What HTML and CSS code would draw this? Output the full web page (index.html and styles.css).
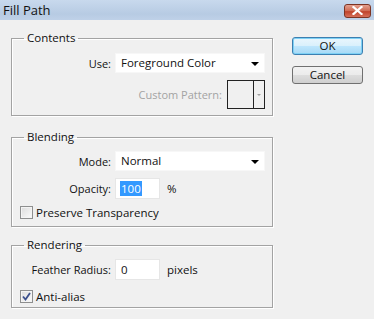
FILE: index.html
```html
<!DOCTYPE html>
<html>
<head>
<meta charset="utf-8">
<link rel="stylesheet" href="styles.css">
</head>
<body>
<div class="dialog">
  <div class="titlebar">
    <span class="title">Fill Path</span>
    <span class="close">
      <svg width="11" height="9" viewBox="0 0 11 9"><path d="M1.5 1 L9.5 8 M9.5 1 L1.5 8" stroke="#fff" stroke-width="2.2" stroke-linecap="square"/></svg>
    </span>
  </div>
  <div class="body">
    <div class="groups">
      <fieldset class="group g-contents">
        <legend>Contents</legend>
        <div class="grid first">
          <span class="label">Use:</span>
          <div class="select">Foreground Color<span class="caret"></span></div>
        </div>
        <div class="row-end">
          <span class="label disabled">Custom Pattern:</span>
          <div class="pattern"><span class="swatch"></span><span class="pat-arrow"><span class="mini-caret"></span></span></div>
        </div>
      </fieldset>

      <fieldset class="group g-blending">
        <legend>Blending</legend>
        <div class="grid first">
          <span class="label">Mode:</span>
          <div class="select">Normal<span class="caret"></span></div>
        </div>
        <div class="grid r-opacity">
          <span class="label">Opacity:</span>
          <div class="inline"><div class="input"><span class="sel">100</span></div><span class="unit">%</span></div>
        </div>
        <label class="check r-preserve"><span class="box"></span>Preserve Transparency</label>
      </fieldset>

      <fieldset class="group g-rendering">
        <legend>Rendering</legend>
        <div class="grid first">
          <span class="label">Feather Radius:</span>
          <div class="inline"><div class="input">0</div><span class="unit">pixels</span></div>
        </div>
        <label class="check r-anti"><span class="box checked"><svg width="9" height="9" viewBox="0 0 9 9"><path d="M1 4.5 L3.5 7.5 L8 1" fill="none" stroke="#3b4f8c" stroke-width="1.8"/></svg></span>Anti-alias</label>
      </fieldset>
    </div>
    <div class="buttons">
      <div class="btn default">OK</div>
      <div class="btn">Cancel</div>
    </div>
  </div>
</div>
</body>
</html>
```

FILE: styles.css
```css
html, body {
  margin: 0;
  padding: 0;
}
body {
  background: #f0f0f0;
  font-family: "Open Sans", "Noto Sans", sans-serif;
  font-size: 11px;
  color: #111;
  width: 374px;
  height: 319px;
  overflow: hidden;
}
.dialog {
  width: 374px;
  height: 319px;
}
.titlebar {
  height: 20px;
  display: flex;
  align-items: center;
  padding: 0 3px 0 3px;
  background: linear-gradient(#c8d9ed, #b7cbe3 70%, #bfd1e8);
  box-sizing: border-box;
}
.title {
  font-size: 13px;
  color: #111;
  line-height: 20px;
}
.close {
  margin-left: auto;
  width: 27px;
  height: 14px;
  box-sizing: border-box;
  border: 1px solid #7c3424;
  border-radius: 3px;
  background: linear-gradient(#e3a08f, #cf6a52 50%, #c0432b 55%, #d6705a);
  display: flex;
  align-items: center;
  justify-content: center;
  margin-top: 1px;
}
.body {
  display: flex;
  padding: 10px 0 0 11px;
}
.groups {
  width: 262px;
}
.group {
  margin: 0;
  padding: 0 6px 6px 8px;
  border: 1px solid #a3a3a3;
  box-shadow: 1px 1px 0 #fff, inset 1px 1px 0 #fff;
  min-width: 0;
}
legend {
  margin-left: 4px;
  padding: 0 3px;
  line-height: 16px;
  font-size: 11.5px;
}
.g-blending { margin-top: 13px; }
.g-rendering { margin-top: 10px; padding-bottom: 3px; }

.grid {
  display: grid;
  grid-template-columns: 91px auto;
  column-gap: 4px;
  align-items: center;
}
.g-contents .first { margin-top: 7px; }
.g-blending .first { margin-top: 6px; }
.g-rendering .first { margin-top: 6px; }
.r-opacity { margin-top: 7px; }
.label {
  text-align: right;
  white-space: nowrap;
}
.disabled { color: #a3a3a3; }

.select {
  position: relative;
  width: 150px;
  height: 20px;
  box-sizing: border-box;
  background: #fff;
  border: 1px solid #f7f7f7;
  line-height: 18px;
  padding-left: 5px;
  font-size: 11.5px;
}
.caret {
  position: absolute;
  right: 5px;
  top: 8px;
  width: 0;
  height: 0;
  border-left: 4px solid transparent;
  border-right: 4px solid transparent;
  border-top: 4px solid #000;
}
.row-end {
  display: flex;
  justify-content: flex-end;
  align-items: center;
  gap: 5px;
  margin-top: 7px;
  padding-right: 1px;
}
.pattern {
  display: flex;
  width: 38px;
  height: 29px;
  box-sizing: border-box;
  border: 1px solid #222;
  background: #f0f0f0;
}
.swatch {
  width: 25px;
  border-right: 1px solid #222;
}
.pat-arrow {
  flex: 1;
  display: flex;
  align-items: center;
  justify-content: center;
}
.mini-caret {
  width: 0;
  height: 0;
  border-left: 2px solid transparent;
  border-right: 2px solid transparent;
  border-top: 2px solid #a0a0a0;
}
.inline {
  display: flex;
  align-items: center;
}
.input {
  width: 45px;
  height: 21px;
  box-sizing: border-box;
  background: #fff;
  border: 1px solid #e6e6e6;
  line-height: 19px;
  padding-left: 5px;
  font-size: 11.5px;
}
.sel {
  background: #3399ff;
  color: #fff;
  display: inline-block;
  line-height: 15px;
  padding: 0 1px;
  margin-left: -1px;
}
.unit {
  margin-left: 7px;
  font-size: 11.5px;
}
.check {
  display: flex;
  align-items: center;
  height: 16px;
  font-size: 11.5px;
}
.r-preserve { margin-top: 5px; }
.r-anti { margin-top: 8px; }
.box {
  width: 13px;
  height: 13px;
  box-sizing: border-box;
  border: 1px solid #8e8f8f;
  background: linear-gradient(135deg, #dcdcdc, #fbfbfb);
  box-shadow: inset 0 0 0 1px #f4f4f4;
  margin-right: 3px;
  display: flex;
  align-items: center;
  justify-content: center;
}
.buttons {
  margin-left: 19px;
  margin-top: 7px;
  display: flex;
  flex-direction: column;
  gap: 11px;
}
.btn {
  width: 71px;
  height: 18px;
  box-sizing: border-box;
  border: 1px solid #707070;
  border-radius: 3px;
  background: linear-gradient(#f2f2f2, #ebebeb 50%, #dddddd 51%, #cfcfcf);
  text-align: center;
  line-height: 16px;
  font-size: 11.5px;
}
.btn.default {
  border-color: #3c7fb1;
  background: linear-gradient(#eaf6fd, #d9f0fc 50%, #bee6fd 51%, #a7d9f5);
  box-shadow: inset 0 0 0 1px #7ed1f5;
}
```
